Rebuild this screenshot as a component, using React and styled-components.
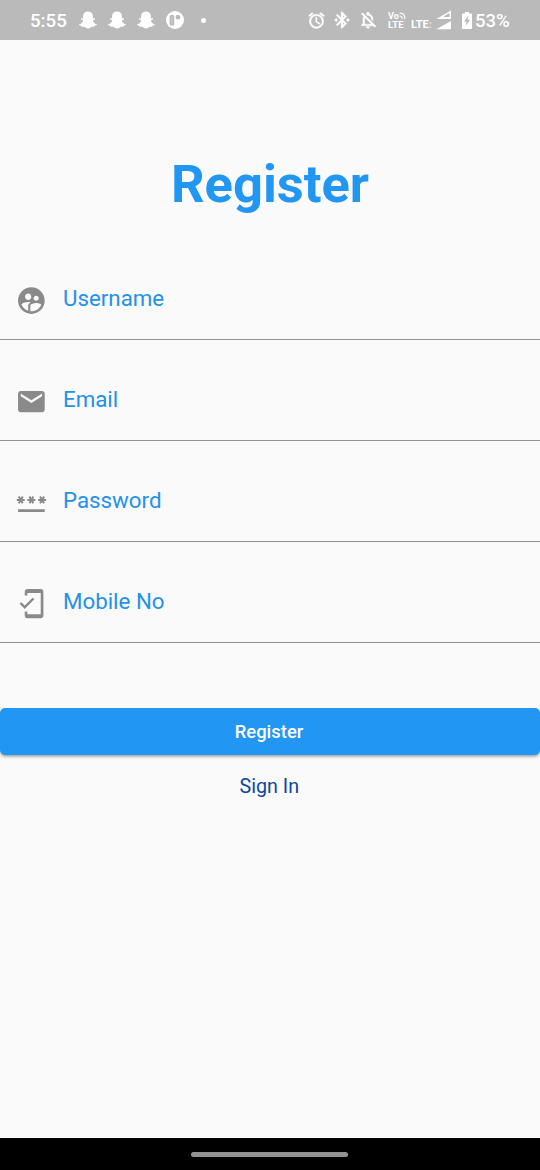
import React from "react";
import styled, { createGlobalStyle } from "styled-components";
import {
  MdAlarm,
  MdBluetoothConnected,
  MdOutlineNotificationsOff,
  MdSupervisedUserCircle,
  MdEmail,
  MdPassword,
  MdMobileFriendly,
} from "react-icons/md";
import { FaSnapchatGhost } from "react-icons/fa";

const GlobalStyle = createGlobalStyle`
  * { box-sizing: border-box; }
  body { margin: 0; background: #fafafa; font-family: Roboto, "Liberation Sans", sans-serif; }
`;

const Screen = styled.div`
  display: flex;
  flex-direction: column;
  width: 540px;
  height: 1170px;
  background: #fafafa;
  overflow: hidden;
`;

const StatusBar = styled.header`
  display: flex;
  justify-content: space-between;
  align-items: center;
  height: 40px;
  padding: 0 31px 0 30px;
  background: #bababa;
  color: #fff;
`;

const StatusGroup = styled.div`
  display: flex;
  align-items: center;
  height: 40px;
`;

const StatusText = styled.span`
  width: ${(p) => p.$width}px;
  margin-left: ${(p) => p.$gap || 0}px;
  padding-top: 1px;
  font-size: ${(p) => p.$size || 19}px;
  font-weight: 500;
  line-height: 22px;
  white-space: nowrap;
`;

const StatusIcon = styled.span`
  display: flex;
  margin-left: ${(p) => p.$gap}px;

  path {
    stroke: ${(p) => (p.$bold ? "#fff" : "none")};
    stroke-width: 0.5px;
  }
  path[fill="none"] {
    stroke: none;
  }
`;

const Dot = styled.span`
  width: 5px;
  height: 5px;
  margin-left: 17px;
  border-radius: 50%;
  background: #fff;
`;

const Volte = styled.span`
  display: flex;
  flex-direction: column;
  gap: 1px;
  width: 20px;
  margin-left: 10px;
  font-size: 9px;
  font-weight: 700;
`;

const VolteTop = styled.span`
  display: flex;
  align-items: center;
  height: 8px;
  line-height: 8px;
`;

const VolteBottom = styled.span`
  font-size: 9.5px;
  line-height: 8px;
  letter-spacing: 0.1px;
`;

const Lte = styled.span`
  width: 23px;
  margin: 10px 0 0 3px;
  font-size: 11px;
  font-weight: 700;
  line-height: 12px;
  white-space: nowrap;
`;

const Faint = styled.span`
  opacity: 0.55;
`;

const Main = styled.main`
  flex: 1;
`;

const Title = styled.h1`
  margin: 113px 0 0;
  height: 62px;
  font-size: 52.5px;
  line-height: 62px;
  font-weight: 700;
  text-align: center;
  color: #2196f3;
`;

const Form = styled.form`
  display: flex;
  flex-direction: column;
  padding-top: 24px;
`;

const Field = styled.label`
  display: flex;
  align-items: flex-start;
  height: 101px;
  padding: 46px 0 0 16px;
  border-bottom: 1px solid #929292;
  color: #8a8a8a;

  svg {
    transform: translate(-0.6px, -0.4px);
  }
`;

const FieldLabel = styled.span`
  margin-left: 15px;
  font-size: 22.3px;
  line-height: 26px;
  color: #2491ea;
`;

const SubmitButton = styled.button`
  height: 47px;
  margin: 65px 0 0;
  padding: 0 2px 0 0;
  border: 0;
  border-radius: 5px;
  background: #2196f3;
  color: #fff;
  font: 500 18.4px/47px Roboto, sans-serif;
  text-align: center;
  box-shadow: 0 3px 3px -2px rgba(0, 0, 0, 0.2), 0 2px 3px rgba(0, 0, 0, 0.2);
`;

const SignIn = styled.a`
  display: block;
  margin-top: 20px;
  padding-right: 1.4px;
  font-size: 19.7px;
  line-height: 23px;
  text-align: center;
  color: #0d47a1;
`;

const NavBar = styled.footer`
  display: flex;
  justify-content: center;
  height: 32px;
  padding: 14px 1px 0 0;
  background: #000;
`;

const HomeHandle = styled.span`
  width: 157px;
  height: 5px;
  border-radius: 3px;
  background: #919191;
`;

const fields = [
  { label: "Username", Icon: MdSupervisedUserCircle },
  { label: "Email", Icon: MdEmail },
  { label: "Password", Icon: MdPassword },
  { label: "Mobile No", Icon: MdMobileFriendly },
];

const BadgeIcon = () => (
  <svg width="18" height="18" viewBox="0 0 18 18">
    <circle cx="9" cy="9" r="9" fill="#fff" />
    <rect x="3.6" y="4" width="4.6" height="10.6" rx="1.6" fill="#bababa" />
    <rect x="5.5" y="6" width="0.8" height="6.6" rx="0.4" fill="#d6d6d6" />
    <circle cx="12" cy="6.2" r="2.4" fill="#bababa" />
  </svg>
);

const WavesIcon = () => (
  <svg width="7" height="8" viewBox="0 0 7 8">
    <g fill="none" stroke="#fff" strokeWidth="1.1">
      <polyline points="0.6,1 3.6,1.6 5.4,3.8 6,7" />
      <polyline points="0.6,3.8 2.6,4.6 3.4,7" />
    </g>
  </svg>
);

const SignalIcon = () => (
  <svg width="16" height="20" viewBox="0 0 16 20">
    <path d="M0.3 9L15 0.6V9Z" fill="#fff" />
    <path d="M8.2 7V5.9L13.6 3V7Z" fill="#bababa" />
    <path d="M0.3 19.2L15 11V19.2Z" fill="#fff" />
  </svg>
);

const BatteryIcon = () => (
  <svg width="10" height="17" viewBox="0 0 10 17">
    <path d="M3 0H7V1.6H9Q10 1.6 10 2.6V16Q10 17 9 17H1Q0 17 0 16V2.6Q0 1.6 1 1.6H3Z" fill="#fff" />
    <path d="M6.4 3.8L2 9.6H4.4L4 13.6L8.2 7.8H5.8Z" fill="#bababa" />
  </svg>
);

export default function App() {
  return (
    <Screen>
      <GlobalStyle />
      <StatusBar>
        <StatusGroup>
          <StatusText $width={38} $size={18.7}>5:55</StatusText>
          <StatusIcon $gap={11}><FaSnapchatGhost size={18} /></StatusIcon>
          <StatusIcon $gap={11}><FaSnapchatGhost size={18} /></StatusIcon>
          <StatusIcon $gap={11}><FaSnapchatGhost size={18} /></StatusIcon>
          <StatusIcon $gap={11}><BadgeIcon /></StatusIcon>
          <Dot />
        </StatusGroup>
        <StatusGroup>
          <StatusIcon $gap={0} $bold><MdAlarm size={19} /></StatusIcon>
          <StatusIcon $gap={6} $bold><MdBluetoothConnected size={20} /></StatusIcon>
          <StatusIcon $gap={6} $bold><MdOutlineNotificationsOff size={20} /></StatusIcon>
          <Volte>
            <VolteTop>Vo<WavesIcon /></VolteTop>
            <VolteBottom>LTE</VolteBottom>
          </Volte>
          <Lte>LTE<Faint>:</Faint></Lte>
          <StatusIcon $gap={2}><SignalIcon /></StatusIcon>
          <StatusIcon $gap={10}><BatteryIcon /></StatusIcon>
          <StatusText $width={34} $gap={3} $size={18.5}>53%</StatusText>
        </StatusGroup>
      </StatusBar>
      <Main>
        <Title>Register</Title>
        <Form>
          {fields.map(({ label, Icon }) => (
            <Field key={label}>
              <Icon size={32} />
              <FieldLabel>{label}</FieldLabel>
            </Field>
          ))}
          <SubmitButton type="button">Register</SubmitButton>
          <SignIn>Sign In</SignIn>
        </Form>
      </Main>
      <NavBar>
        <HomeHandle />
      </NavBar>
    </Screen>
  );
}
